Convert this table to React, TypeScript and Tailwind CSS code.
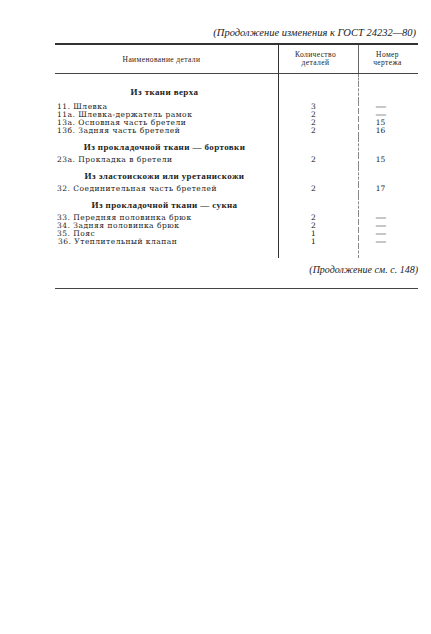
import type { ReactNode } from "react";

const serif = { fontFamily: '"Liberation Serif", "DejaVu Serif", serif' };
const wide = { fontFamily: '"DejaVu Serif", "Liberation Serif", serif' };

type RowProps = {
  h: number;
  name?: ReactNode;
  qty?: string;
  num?: string;
  heading?: boolean;
};

function Row({ h, name, qty, num, heading }: RowProps) {
  return (
    <div
      className="grid grid-cols-[223px_80px_60px]"
      style={{ height: h, lineHeight: `${h}px` }}
    >
      {heading ? (
        <div className="text-center pr-[4px] text-[9px] font-bold tracking-[0.4px] whitespace-nowrap">
          {name}
        </div>
      ) : (
        <div className="pl-[2px] text-[7.5px] tracking-[0.5px] whitespace-nowrap" style={wide}>
          {name}
        </div>
      )}
      <div className="border-l border-[#333] text-center pr-[10px] text-[7.5px]" style={wide}>
        {qty}
      </div>
      <div className="border-l border-dashed border-[#888] text-center pr-[16px] text-[7.5px]" style={wide}>
        {num === "—" ? <span className="inline-block scale-x-150">—</span> : num}
      </div>
    </div>
  );
}

export default function App() {
  return (
    <div className="w-[431px] h-[634px] bg-white text-[#222]" style={serif}>
      <div className="ml-[55px] w-[363px] pt-[26px]">
        <div className="h-[14px] leading-[14px] text-right pr-[2px] italic text-[10.5px] whitespace-nowrap">
          (Продолжение изменения к ГОСТ 24232—80)
        </div>

        <div className="mt-[3px] h-[1.5px] bg-[#333]" />

        <div className="grid grid-cols-[223px_80px_60px] h-[29px] border-b border-[#444] text-[7.5px] leading-[8px] tracking-[0.4px]">
          <div className="flex items-center justify-center pr-[10px] pt-[2px]">
            Наименование детали
          </div>
          <div className="border-l border-[#333] flex flex-col items-center justify-center pr-[6px]">
            <span>Количество</span>
            <span>деталей</span>
          </div>
          <div className="border-l border-[#666] flex flex-col items-center justify-center pr-[2px]">
            <span>Номер</span>
            <span>чертежа</span>
          </div>
        </div>

        <Row h={10} />
        <Row h={16} heading name="Из ткани верха" />
        <Row h={3} />
        <Row h={8} name="11. Шлевка" qty="3" num="—" />
        <Row h={8} name="11а. Шлевка-держатель рамок" qty="2" num="—" />
        <Row h={8} name="13а. Основная часть бретели" qty="2" num="15" />
        <Row h={8} name="13б. Задняя часть бретелей" qty="2" num="16" />
        <Row h={4} />
        <Row h={16} heading name="Из прокладочной ткани — бортовки" />
        <Row h={1} />
        <Row h={8} name="23а. Прокладка в бретели" qty="2" num="15" />
        <Row h={4} />
        <Row h={16} heading name="Из эластоискожи или уретанискожи" />
        <Row h={1} />
        <Row h={8} name="32. Соединительная часть бретелей" qty="2" num="17" />
        <Row h={4} />
        <Row h={16} heading name="Из прокладочной ткани — сукна" />
        <Row h={1} />
        <Row h={8} name="33. Передняя половинка брюк" qty="2" num="—" />
        <Row h={8} name="34. Задняя половинка брюк" qty="2" num="—" />
        <Row h={8} name="35. Пояс" qty="1" num="—" />
        <Row h={8} name={<span className="pl-[1px]">36. Утеплительный клапан</span>} qty="1" num="—" />
        <Row h={12} />

        <div className="mt-[5px] h-[14px] leading-[14px] text-right italic text-[10px] whitespace-nowrap">
          (Продолжение см. с. 148)
        </div>

        <div className="mt-[11px] h-[1.5px] bg-[#444]" />
      </div>
    </div>
  );
}
